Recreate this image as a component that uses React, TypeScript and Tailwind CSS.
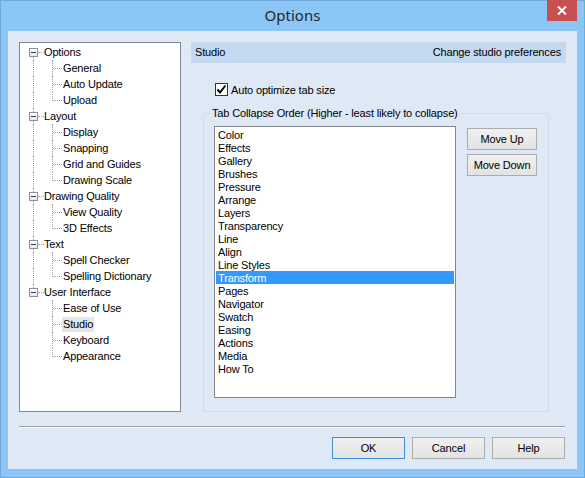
import React from "react";

const font = { fontFamily: '"Liberation Sans", Arial, sans-serif' };

const tree = [
  { label: "Options", children: ["General", "Auto Update", "Upload"] },
  { label: "Layout", children: ["Display", "Snapping", "Grid and Guides", "Drawing Scale"] },
  { label: "Drawing Quality", children: ["View Quality", "3D Effects"] },
  { label: "Text", children: ["Spell Checker", "Spelling Dictionary"] },
  { label: "User Interface", children: ["Ease of Use", "Studio", "Keyboard", "Appearance"] },
];

const tabs = [
  "Color", "Effects", "Gallery", "Brushes", "Pressure", "Arrange", "Layers", "Transparency",
  "Line", "Align", "Line Styles", "Transform", "Pages", "Navigator", "Swatch", "Easing",
  "Actions", "Media", "How To",
];

function ParentRow({ label, first, last }: { label: string; first: boolean; last: boolean }) {
  return (
    <div className="flex h-4 items-center">
      <div className="relative h-full w-[24px] shrink-0">
        {!first && <div className="absolute left-[13px] top-0 h-[4px] border-l border-dotted border-[#a0a0a0]" />}
        {!last && <div className="absolute left-[13px] top-[13px] h-[3px] border-l border-dotted border-[#a0a0a0]" />}
        <div className="absolute left-[9px] top-[4px] flex h-[9px] w-[9px] items-center justify-center border border-[#919191] bg-gradient-to-b from-white to-[#e6e6e6]">
          <div className="h-px w-[5px] bg-[#1f3f73]" />
        </div>
        <div className="absolute left-[18px] top-[8px] w-[6px] border-t border-dotted border-[#a0a0a0]" />
      </div>
      <span className="leading-[15px]">{label}</span>
    </div>
  );
}

function ChildRow({ label, parentLast, last, selected }: { label: string; parentLast: boolean; last: boolean; selected?: boolean }) {
  return (
    <div className="flex h-4 items-center">
      <div className="relative h-full w-[24px] shrink-0">
        {!parentLast && <div className="absolute left-[13px] top-0 h-4 border-l border-dotted border-[#a0a0a0]" />}
      </div>
      <div className="relative h-full w-[18px] shrink-0">
        <div className={`absolute left-[8px] top-0 border-l border-dotted border-[#a0a0a0] ${last ? "h-[9px]" : "h-4"}`} />
        <div className="absolute left-[9px] top-[8px] w-[9px] border-t border-dotted border-[#a0a0a0]" />
      </div>
      <span className={`px-px leading-[15px] ${selected ? "bg-[#e5e5e5]" : ""}`}>{label}</span>
    </div>
  );
}

function Button({ children, className = "", focused = false }: { children: React.ReactNode; className?: string; focused?: boolean }) {
  return (
    <button
      className={`flex h-[22px] items-center justify-center border bg-gradient-to-b from-[#f0f0f0] to-[#e3e3e3] text-[11px] text-black ${
        focused ? "border-[#3c8fe0]" : "border-[#acacac]"
      } ${className}`}
    >
      {children}
    </button>
  );
}

export default function App() {
  return (
    <div className="relative flex h-[478px] w-[585px] flex-col border border-[#6fa8dc] bg-[#8cc6f7] text-[11px] tracking-[-0.15px] text-black" style={font}>
      <div className="relative flex h-[30px] shrink-0 items-center justify-center pb-[2px]">
        <span className="text-[15px] tracking-normal text-[#262626]" style={{ fontFamily: '"Noto Sans", "Open Sans", sans-serif' }}>
          Options
        </span>
        <div className="absolute right-[7px] top-[-1px] flex h-[21px] w-[30px] items-center justify-center bg-[#c75050]">
          <svg width="10" height="9" viewBox="0 0 10 9">
            <path d="M1 0.5 L9 8.5 M9 0.5 L1 8.5" stroke="white" strokeWidth="2" />
          </svg>
        </div>
      </div>

      <div className="mx-[7px] mb-[8px] flex flex-1 flex-col bg-[#dfe9f5] px-[11px] pb-[10px] pt-[11px]">
        <div className="flex h-[370px] gap-[10px]">
          <div className="w-[162px] shrink-0 border border-[#828790] bg-white pt-px">
            {tree.map((group, gi) => (
              <div key={group.label}>
                <ParentRow label={group.label} first={gi === 0} last={gi === tree.length - 1} />
                {group.children.map((c, ci) => (
                  <ChildRow
                    key={c}
                    label={c}
                    parentLast={gi === tree.length - 1}
                    last={ci === group.children.length - 1}
                    selected={c === "Studio"}
                  />
                ))}
              </div>
            ))}
          </div>

          <div className="flex w-[375px] flex-col">
            <div className="flex h-[21px] shrink-0 items-center justify-between bg-[#c4d8ef] pl-[4px] pr-[5px]">
              <span>Studio</span>
              <span>Change studio preferences</span>
            </div>

            <div className="ml-[24px] mt-[20px] flex h-[13px] items-center gap-[3px]">
              <div className="flex h-[13px] w-[13px] items-center justify-center border border-[#333333] bg-white">
                <svg width="11" height="11" viewBox="0 0 11 11">
                  <path d="M1.5 5.5 L4 8.5 L9.5 1.5" stroke="black" strokeWidth="2" fill="none" />
                </svg>
              </div>
              <span className="pt-px">Auto optimize tab size</span>
            </div>

            <div className="relative ml-[12px] mt-[17px] flex h-[299px] w-[346px] border border-[#d3dbe3] pl-[10px] pt-[12px]">
              <span className="absolute left-[6px] top-[-8px] bg-[#dfe9f5] px-[2px] leading-[14px]">
                Tab Collapse Order (Higher - least likely to collapse)
              </span>
              <div className="h-[272px] w-[242px] border border-[#828790] bg-white pl-px pr-px pt-px">
                {tabs.map((t) => (
                  <div
                    key={t}
                    className={`h-[13px] pl-[2px] leading-[14px] ${t === "Transform" ? "bg-[#3399ff] text-white" : ""}`}
                  >
                    {t}
                  </div>
                ))}
              </div>
              <div className="ml-[11px] mt-[2px] flex flex-col gap-[4px]">
                <Button className="w-[70px]">Move Up</Button>
                <Button className="w-[70px]">Move Down</Button>
              </div>
            </div>
          </div>
        </div>

        <div className="mr-px mt-[14px] border-b border-t border-b-white border-t-[#a0a0a0]" />

        <div className="mr-px mt-[9px] flex justify-end gap-[7px]">
          <Button className="w-[73px]" focused>
            OK
          </Button>
          <Button className="w-[73px]">Cancel</Button>
          <Button className="w-[73px]">Help</Button>
        </div>
      </div>
    </div>
  );
}
